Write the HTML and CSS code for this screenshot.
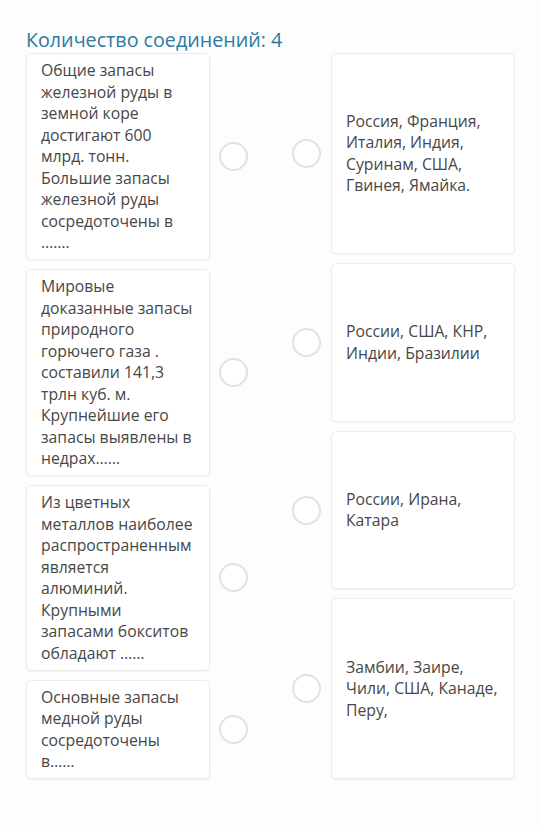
FILE: index.html
```html
<!DOCTYPE html>
<html>
<head>
  <meta charset="utf-8">
  <title>Количество соединений</title>
  <link rel="stylesheet" href="styles.css">
</head>
<body>
  <h1 class="title">Количество соединений: 4</h1>

  <div class="board">
    <div class="column column-left">
      <div class="item">
        <div class="card">Общие запасы железной руды в земной коре достигают 600 млрд. тонн. Большие запасы железной руды сосредоточены в …….</div>
        <span class="dot"></span>
      </div>
      <div class="item">
        <div class="card">Мировые доказанные запасы природного горючего газа . составили 141,3 трлн куб. м. Крупнейшие его запасы выявлены в недрах……</div>
        <span class="dot"></span>
      </div>
      <div class="item">
        <div class="card">Из цветных металлов наиболее распространенным является алюминий. Крупными запасами бокситов обладают ……</div>
        <span class="dot"></span>
      </div>
      <div class="item">
        <div class="card">Основные запасы медной руды сосредоточены в……</div>
        <span class="dot"></span>
      </div>
    </div>

    <div class="column column-right">
      <div class="item">
        <span class="dot"></span>
        <div class="card card-answer">Россия, Франция, Италия, Индия, Суринам, США, Гвинея, Ямайка.</div>
      </div>
      <div class="item">
        <span class="dot"></span>
        <div class="card card-answer">России, США, КНР, Индии, Бразилии</div>
      </div>
      <div class="item">
        <span class="dot"></span>
        <div class="card card-answer">России, Ирана, Катара</div>
      </div>
      <div class="item">
        <span class="dot"></span>
        <div class="card card-answer">Замбии, Заире, Чили, США, Канаде, Перу,</div>
      </div>
    </div>
  </div>
</body>
</html>
```

FILE: styles.css
```css
body {
  margin: 0;
  padding: 27px 25px 40px 26px;
  background-color: #fdfdfd;
  font-family: "Open Sans", "Noto Sans", sans-serif;
  color: #474747;
}

.title {
  margin: 0;
  font-size: 19.7px;
  line-height: 26px;
  font-weight: normal;
  color: #2b7ba3;
}

.board {
  display: flex;
  justify-content: space-between;
}

.column {
  display: flex;
  flex-direction: column;
  gap: 9px;
}

.column-right {
  display: grid;
  grid-template-rows: 201px 159px 158px 181px;
  gap: 9px;
}

.item {
  display: flex;
  align-items: center;
  gap: 9px;
}

.column-right .item {
  gap: 10px;
  align-items: stretch;
}

.column-right .dot {
  align-self: center;
}

.card {
  box-sizing: border-box;
  width: 184px;
  padding: 6px 14px 5.5px 14px;
  font-size: 15.75px;
  line-height: 21.5px;
  background-color: #fff;
  border: 1px solid #ececec;
  border-radius: 5px;
  box-shadow: 0 1px 2px rgba(0, 0, 0, 0.05);
}

.card-answer {
  display: flex;
  align-items: center;
}

.dot {
  flex: none;
  box-sizing: border-box;
  width: 29px;
  height: 29px;
  border: 2px solid #e2e2e2;
  border-radius: 50%;
  background-color: #fff;
}
```
